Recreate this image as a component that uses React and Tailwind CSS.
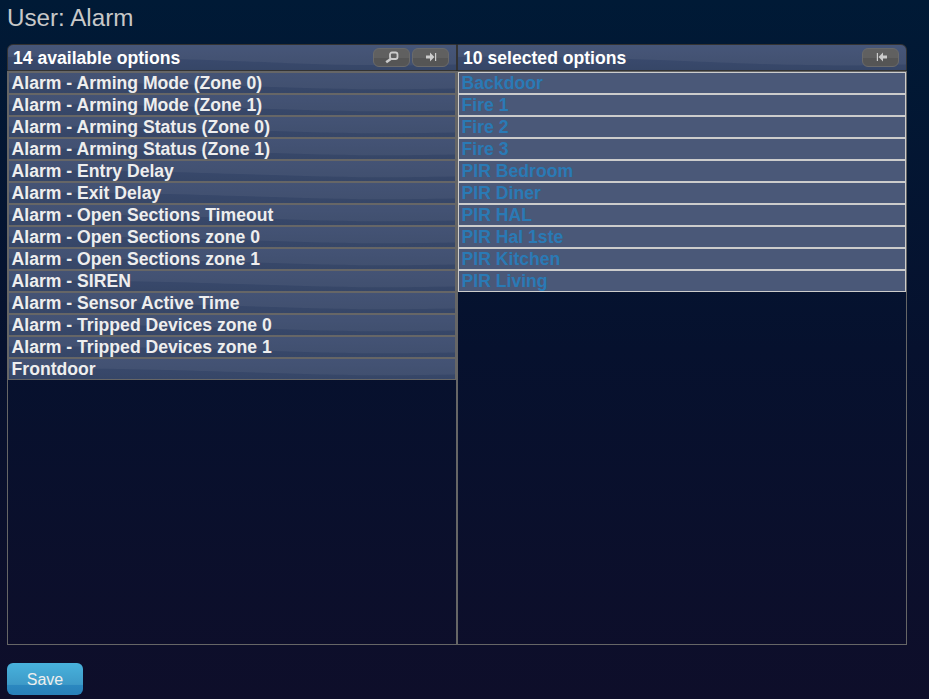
const left = [
  'Alarm - Arming Mode (Zone 0)',
  'Alarm - Arming Mode (Zone 1)',
  'Alarm - Arming Status (Zone 0)',
  'Alarm - Arming Status (Zone 1)',
  'Alarm - Entry Delay',
  'Alarm - Exit Delay',
  'Alarm - Open Sections Timeout',
  'Alarm - Open Sections zone 0',
  'Alarm - Open Sections zone 1',
  'Alarm - SIREN',
  'Alarm - Sensor Active Time',
  'Alarm - Tripped Devices zone 0',
  'Alarm - Tripped Devices zone 1',
  'Frontdoor',
];
const right = ['Backdoor', 'Fire 1', 'Fire 2', 'Fire 3', 'PIR Bedroom', 'PIR Diner', 'PIR HAL', 'PIR Hal 1ste', 'PIR Kitchen', 'PIR Living'];

function Gloss() {
  return (
    <svg className="absolute inset-0 h-full w-full" viewBox="0 0 446 20" preserveAspectRatio="none" aria-hidden="true">
      <path d="M0 9.5C90 9 150 10.5 230 13S350 17.5 446 15.5V0H0Z" fill="#fff" fillOpacity="0.05" />
    </svg>
  );
}

function ToolButton({ children, label }) {
  return (
    <button aria-label={label} className="flex h-[19px] w-[37px] items-center justify-center rounded-[6px] border border-[#6a6a6a] bg-linear-to-b from-[#606060] from-50% to-[#555] to-50%">
      {children}
    </button>
  );
}

function Header({ title, round, children }) {
  return (
    <div className={`relative flex h-[27px] items-center overflow-hidden border border-[#333] bg-linear-to-b from-[#3d4d72] to-[#364667] pl-[5px] ${round}`}>
      <Gloss />
      <h2 className="relative grow pt-px text-[17.6px] leading-[25px] font-bold text-white">{title}</h2>
      <div className="relative flex gap-[2px]">{children}</div>
    </div>
  );
}

export default function App() {
  return (
    <div className="h-[699px] overflow-hidden bg-linear-to-b from-[#001a36] via-[#06112e] to-[#0e0e2a] px-[7px] font-['Liberation_Sans',Arial,sans-serif]">
      <h1 className="h-[44px] pt-[4px] text-[24.2px] leading-[28px] text-[#c8c8c8]">User: Alarm</h1>
      <div className="flex h-[601px] w-[900px]">
        <section className="flex w-[450px] flex-col">
          <Header title="14 available options" round="rounded-tl-[6px] pr-[7px]">
            <ToolButton label="Search">
              <svg width="14" height="13" viewBox="0 0 14 13" fill="none" stroke="#ccc">
                <rect x="5" y="1.5" width="7.5" height="6.5" rx="2" strokeWidth="1.8" />
                <path d="M6 7.8L1.2 11.2" strokeWidth="2.6" />
              </svg>
            </ToolButton>
            <ToolButton label="Add all">
              <svg width="12" height="10" viewBox="0 0 12 10" fill="#ccc" className="mb-px">
                <path d="M1 3.5h4V.5L9.4 5 5 9.5V6.5H1ZM10 1h1.2v8H10Z" />
              </svg>
            </ToolButton>
          </Header>
          <ul className="grow border border-[#666]">
            {left.map((t) => (
              <li key={t} className="relative h-[22px] border border-[#666] bg-linear-to-b from-[#3a4a6e] to-[#364667] pl-[2.6px] text-[17.6px] leading-[20px] font-bold text-[#eee]">
                <Gloss />
                <span className="relative">{t}</span>
              </li>
            ))}
          </ul>
        </section>
        <section className="flex w-[450px] flex-col">
          <Header title="10 selected options" round="rounded-tr-[6px] pr-[7px]">
            <ToolButton label="Remove all">
              <svg width="12" height="10" viewBox="0 0 12 10" fill="#ccc" className="mb-px ml-[2px]">
                <path d="M11 3.5H7V.5L2.6 5 7 9.5V6.5h4ZM.8 1H2v8H.8Z" />
              </svg>
            </ToolButton>
          </Header>
          <ul className="grow border border-[#666]">
            {right.map((t) => (
              <li key={t} className="h-[22px] border border-[#ccc] bg-[#4a5878] pl-[2.6px] text-[17.6px] leading-[20px] font-bold text-[#2a7ab5]">
                {t}
              </li>
            ))}
          </ul>
        </section>
      </div>
      <button className="mt-[18px] h-[32px] w-[76px] rounded-[6px] bg-[linear-gradient(#48b2dc_0%,#3d9ac8_67%,#2b87bf_70%,#2880b8_100%)] pt-px text-[16px] text-[#eee]">Save</button>
    </div>
  );
}
